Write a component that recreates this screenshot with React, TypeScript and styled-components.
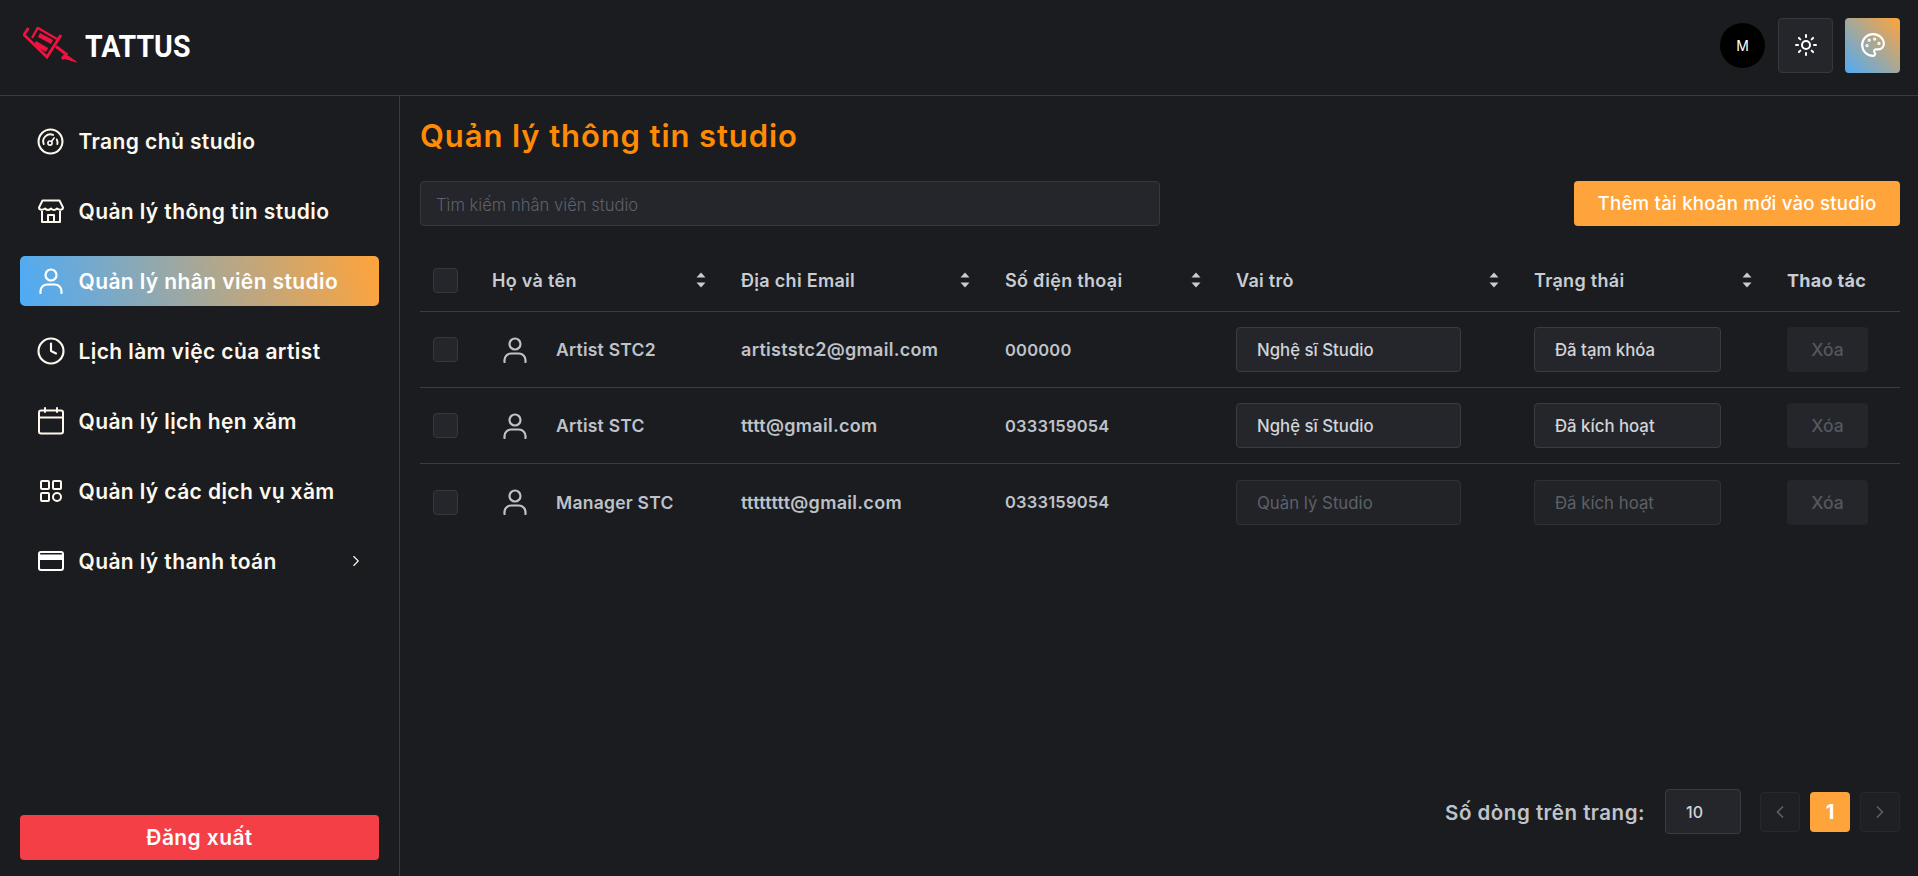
import styled, { createGlobalStyle } from 'styled-components'
import { ChevronLeft, ChevronRight, Clock, Palette, Sun } from 'lucide-react'

const GlobalStyle = createGlobalStyle`
  * { box-sizing: border-box; }
  html, body { margin: 0; height: 100%; background: #1a1c20; }
  body { font-family: Inter, "Liberation Sans", sans-serif; overflow: hidden; }
`

const Page = styled.div`
  width: 1918px;
  height: 876px;
  display: flex;
  flex-direction: column;
  background: #1a1c20;
  color: #fff;
`

const TopBar = styled.header`
  height: 96px;
  flex: none;
  display: flex;
  align-items: center;
  justify-content: space-between;
  padding: 0 18px 5px 23px;
  border-bottom: 1px solid #3a3c42;
`

const Brand = styled.div`
  display: flex;
  align-items: center;
  gap: 8px;
`

const BrandName = styled.span`
  display: inline-block;
  margin-top: 2px;
  font-family: Roboto, sans-serif;
  font-weight: 700;
  font-size: 32px;
  line-height: 1;
  color: #fff;
  transform: scaleX(0.89);
  transform-origin: left center;
`

const TopActions = styled.div`
  display: flex;
  align-items: center;
  gap: 12px;
`

const Avatar = styled.div`
  width: 45px;
  height: 45px;
  margin-right: 1px;
  border-radius: 50%;
  background: #000;
  display: flex;
  align-items: center;
  justify-content: center;
  font-size: 14px;
  font-weight: 400;
`

const IconTile = styled.div<{ $gradient?: boolean }>`
  width: 55px;
  height: 55px;
  border-radius: 4px;
  display: flex;
  align-items: center;
  justify-content: center;
  border: ${(p) => (p.$gradient ? 'none' : '1px solid #36383e')};
  background: ${(p) =>
    p.$gradient ? 'linear-gradient(45deg, #4dabf7 0%, #ffa43a 100%)' : '#24262b'};
`

const Body = styled.div`
  flex: 1;
  min-height: 0;
  display: flex;
`

const Sidebar = styled.aside`
  width: 400px;
  flex: none;
  display: flex;
  flex-direction: column;
  padding: 20px 20px 16px;
  border-right: 1px solid #3a3c42;
`

const Menu = styled.nav`
  display: flex;
  flex-direction: column;
  gap: 20px;
`

const MenuItem = styled.div<{ $active?: boolean }>`
  height: 50px;
  display: flex;
  align-items: center;
  gap: 13px;
  padding-left: 15.5px;
  padding-right: 14px;
  border-radius: 5px;
  font-size: 21px;
  font-weight: 600;
  letter-spacing: 0.4px;
  color: ${(p) => (p.$active ? '#fff' : '#fff8ec')};
  background: ${(p) =>
    p.$active ? 'linear-gradient(75deg, #4dabf7 0%, #ffa43a 100%)' : 'transparent'};
`

const MenuIcon = styled.span`
  width: 30px;
  height: 30px;
  flex: none;
  display: flex;
  align-items: center;
  justify-content: center;
`

const MenuLabel = styled.span`
  flex: 1;
  white-space: nowrap;
`

const LogoutButton = styled.button`
  margin-top: auto;
  height: 45px;
  border: none;
  border-radius: 4px;
  background: #f43f46;
  color: #fff;
  font-family: inherit;
  font-size: 21px;
  font-weight: 600;
  letter-spacing: 0.4px;
`

const Main = styled.main`
  flex: 1;
  min-width: 0;
  display: flex;
  flex-direction: column;
  padding: 18px 18px 42px 20px;
`

const Title = styled.h1`
  margin: 0;
  font-size: 31px;
  line-height: 44px;
  font-weight: 600;
  letter-spacing: 0.9px;
  color: #ff8a05;
`

const Toolbar = styled.div`
  margin-top: 23px;
  display: flex;
  justify-content: space-between;
`

const SearchBox = styled.div`
  width: 740px;
  height: 45px;
  display: flex;
  align-items: center;
  padding: 3px 16px 0 15px;
  border: 1px solid #36383e;
  border-radius: 4px;
  background: #24262b;
  color: #5d6068;
  font-size: 16.6px;
  font-weight: 300;
`

const AddButton = styled.div`
  width: 326px;
  height: 45px;
  display: flex;
  align-items: center;
  justify-content: center;
  border-radius: 4px;
  background: #ffa43a;
  color: #fff;
  font-size: 18.7px;
  font-weight: 500;
  letter-spacing: 0.2px;
`

const Row = styled.div<{ $header?: boolean; $last?: boolean }>`
  display: grid;
  grid-template-columns: 60px 249px 264px 231px 298px 253px 125px;
  align-items: center;
  height: ${(p) => (p.$header ? '65px' : '76px')};
  margin-top: ${(p) => (p.$header ? '21px' : '0')};
  padding-top: ${(p) => (p.$header ? '2px' : '0')};
  border-bottom: ${(p) => (p.$last ? 'none' : '1px solid #3a3c42')};
`

const CheckCell = styled.div`
  padding-left: 13px;
`

const CheckBox = styled.div`
  width: 25px;
  height: 25px;
  border: 1px solid #36383e;
  border-radius: 4px;
  background: #24262b;
`

const HeadCell = styled.div`
  display: flex;
  align-items: center;
  justify-content: space-between;
  padding: 0 22px 0 12px;
  font-size: 18px;
  font-weight: 600;
  letter-spacing: 0.3px;
  color: #c9ccd2;
`

const ActionHead = styled(HeadCell)`
  font-weight: 700;
  padding-right: 0;
`

const NameCell = styled.div`
  display: flex;
  align-items: center;
  gap: 28px;
  padding-left: 22px;
  font-size: 17.5px;
  font-weight: 600;
  letter-spacing: 0.25px;
  color: #bfc2c8;
`

const TextCell = styled.div`
  padding-left: 12px;
  font-size: 18px;
  font-weight: 600;
  letter-spacing: 0.3px;
  color: #bfc2c8;
`

const PhoneCell = styled(TextCell)`
  font-size: 16.5px;
  letter-spacing: 0.2px;
`

const FieldCell = styled.div`
  padding-left: 12px;
`

const SelectBox = styled.div<{ $width: number; $disabled?: boolean }>`
  width: ${(p) => p.$width}px;
  height: 45px;
  display: flex;
  align-items: center;
  padding: 1px 0 0 20px;
  border: 1px solid ${(p) => (p.$disabled ? '#2f3136' : '#3a3c42')};
  border-radius: 4px;
  background: ${(p) => (p.$disabled ? '#212327' : '#24262b')};
  color: ${(p) => (p.$disabled ? '#5d6068' : '#d2d4d8')};
  font-size: 16.8px;
  font-weight: ${(p) => (p.$disabled ? 400 : 500)};
`

const DeleteButton = styled.div`
  width: 81px;
  height: 45px;
  display: flex;
  align-items: center;
  justify-content: center;
  border-radius: 4px;
  background: #24262b;
  color: #54575e;
  font-size: 17.5px;
  font-weight: 500;
`

const Pagination = styled.div`
  margin-top: auto;
  display: flex;
  align-items: center;
  justify-content: flex-end;
`

const PageLabel = styled.span`
  margin-right: 20px;
  padding-top: 2px;
  font-size: 20.5px;
  font-weight: 600;
  letter-spacing: 0.5px;
  color: #c0c3c9;
`

const PageSize = styled.div`
  width: 76px;
  height: 45px;
  margin-right: 19px;
  display: flex;
  align-items: center;
  padding-left: 20px;
  border: 1px solid #3a3c42;
  border-radius: 4px;
  background: #24262b;
  color: #d2d4d8;
  font-size: 16px;
  font-weight: 500;
`

const PageButton = styled.div<{ $current?: boolean }>`
  width: 40px;
  height: 40px;
  margin-left: ${(p) => (p.$current ? '10px' : '0')};
  margin-right: ${(p) => (p.$current ? '10px' : '0')};
  display: flex;
  align-items: center;
  justify-content: center;
  border: ${(p) => (p.$current ? 'none' : '1px solid #26282c')};
  border-radius: 4px;
  background: ${(p) => (p.$current ? '#ffa43a' : '#1e2024')};
  color: ${(p) => (p.$current ? '#fff' : '#5d6068')};
  font-size: 20px;
  font-weight: 700;
`

const Logo = () => (
  <svg width="54" height="38" viewBox="4 3 54 38" fill="none" stroke="#f0123f">
    <path d="M9.5 5 L5 11.7 L28 34 L42 12" strokeWidth="2.8" />
    <path d="M18 4.5 L38 16" strokeWidth="2.4" />
    <path d="M19 4.5 L13 15" strokeWidth="2.4" />
    <path d="M20 12 L33 19" strokeWidth="4.4" />
    <path d="M16 20 L28 27" strokeWidth="4.4" />
    <path d="M37 23.5 L47 31 L43 36" strokeWidth="3" />
    <path d="M46 31 L57.5 39 L44 35 Z" fill="#f0123f" strokeWidth="1" />
  </svg>
)

const GaugeIcon = () => (
  <svg width="27" height="27" viewBox="0 0 26 26" fill="none" stroke="#fff8ec" strokeWidth="2" strokeLinecap="round">
    <circle cx="13" cy="13" r="11.5" />
    <path d="M6.5 15.5 A6.8 6.8 0 0 1 15.5 6.7" strokeWidth="1.8" />
    <path d="M19 11 A6.8 6.8 0 0 1 19.6 15.5" strokeWidth="1.8" />
    <circle cx="12.5" cy="14.5" r="2" strokeWidth="1.6" />
    <path d="M14 13 L16.5 9.5" strokeWidth="1.6" />
  </svg>
)

const StoreIcon = () => (
  <svg width="26" height="24" viewBox="0 0 26 24" fill="none" stroke="#fff8ec" strokeWidth="2" strokeLinejoin="round">
    <path d="M4.5 1.5 H21.5 L25 8.5 C25 11 21.5 11.5 19 9.5 C17 11.5 15 11.5 13 9.5 C11 11.5 9 11.5 7 9.5 C4.5 11.5 1 11 1 8.5 Z" />
    <path d="M4 12 V23 H22 V12" />
    <path d="M10 23 V16 H16 V23" />
  </svg>
)

const PersonIcon = ({ size = 26 }: { size?: number }) => (
  <svg width={size} height={size} viewBox="0 0 26 26" fill="none" stroke="currentColor" strokeWidth="2.2" strokeLinecap="round">
    <circle cx="13" cy="7" r="5.5" />
    <path d="M2.5 25 V23 A6.5 6.5 0 0 1 9 16.5 H17 A6.5 6.5 0 0 1 23.5 23 V25" />
  </svg>
)

const CalendarIcon = () => (
  <svg width="26" height="28" viewBox="0 0 26 28" fill="none" stroke="#fff8ec" strokeWidth="2" strokeLinecap="round">
    <rect x="1" y="3.5" width="24" height="23" rx="2" />
    <path d="M1 10.5 H25 M7 1 V5 M19 1 V5" />
  </svg>
)

const ServicesIcon = () => (
  <svg width="24" height="24" viewBox="0 0 24 24" fill="none" stroke="#fff8ec" strokeWidth="2">
    <rect x="2" y="2" width="8" height="8" rx="1" />
    <rect x="14" y="2" width="8" height="8" rx="1" />
    <rect x="2" y="14" width="8" height="8" rx="1" />
    <circle cx="18" cy="18" r="4" />
  </svg>
)

const CardIcon = () => (
  <svg width="26" height="20" viewBox="0 0 26 20" fill="none">
    <rect x="1" y="1" width="24" height="18" rx="2" stroke="#fff" strokeWidth="2" />
    <rect x="1" y="3.5" width="24" height="5.5" fill="#fff" />
  </svg>
)

const SortIcon = () => (
  <svg width="12" height="18" viewBox="0 0 12 18" fill="#c9ccd2">
    <path d="M6 1.5 L10.5 6.5 H1.5 Z" />
    <path d="M6 16.5 L1.5 11.5 H10.5 Z" />
  </svg>
)

const navItems = [
  { label: 'Trang chủ studio', icon: <GaugeIcon /> },
  { label: 'Quản lý thông tin studio', icon: <StoreIcon /> },
  { label: 'Quản lý nhân viên studio', icon: <PersonIcon />, active: true },
  { label: 'Lịch làm việc của artist', icon: <Clock size={30} strokeWidth={1.7} /> },
  { label: 'Quản lý lịch hẹn xăm', icon: <CalendarIcon /> },
  { label: 'Quản lý các dịch vụ xăm', icon: <ServicesIcon /> },
  { label: 'Quản lý thanh toán', icon: <CardIcon />, more: true },
]

const columns = ['Họ và tên', 'Địa chỉ Email', 'Số điện thoại', 'Vai trò', 'Trạng thái']

const staff = [
  { name: 'Artist STC2', email: 'artiststc2@gmail.com', phone: '000000', role: 'Nghệ sĩ Studio', status: 'Đã tạm khóa' },
  { name: 'Artist STC', email: 'tttt@gmail.com', phone: '0333159054', role: 'Nghệ sĩ Studio', status: 'Đã kích hoạt' },
  { name: 'Manager STC', email: 'tttttttt@gmail.com', phone: '0333159054', role: 'Quản lý Studio', status: 'Đã kích hoạt', locked: true },
]

const App = () => {
  return (
    <Page>
      <GlobalStyle />
      <TopBar>
        <Brand>
          <Logo />
          <BrandName>TATTUS</BrandName>
        </Brand>
        <TopActions>
          <Avatar>M</Avatar>
          <IconTile>
            <Sun size={24} color="#fff" strokeWidth={2} />
          </IconTile>
          <IconTile $gradient>
            <Palette size={26} color="#fff" strokeWidth={2} />
          </IconTile>
        </TopActions>
      </TopBar>
      <Body>
        <Sidebar>
          <Menu>
            {navItems.map((item) => (
              <MenuItem key={item.label} $active={item.active}>
                <MenuIcon>{item.icon}</MenuIcon>
                <MenuLabel>{item.label}</MenuLabel>
                {item.more && <ChevronRight size={18} strokeWidth={1.5} />}
              </MenuItem>
            ))}
          </Menu>
          <LogoutButton>Đăng xuất</LogoutButton>
        </Sidebar>
        <Main>
          <Title>Quản lý thông tin studio</Title>
          <Toolbar>
            <SearchBox>Tìm kiếm nhân viên studio</SearchBox>
            <AddButton>Thêm tài khoản mới vào studio</AddButton>
          </Toolbar>
          <Row $header>
            <CheckCell>
              <CheckBox />
            </CheckCell>
            {columns.map((column) => (
              <HeadCell key={column}>
                {column}
                <SortIcon />
              </HeadCell>
            ))}
            <ActionHead>Thao tác</ActionHead>
          </Row>
          {staff.map((person, index) => (
            <Row key={person.name} $last={index === staff.length - 1}>
              <CheckCell>
                <CheckBox />
              </CheckCell>
              <NameCell>
                <PersonIcon size={26} />
                {person.name}
              </NameCell>
              <TextCell>{person.email}</TextCell>
              <PhoneCell>{person.phone}</PhoneCell>
              <FieldCell>
                <SelectBox $width={225} $disabled={person.locked}>{person.role}</SelectBox>
              </FieldCell>
              <FieldCell>
                <SelectBox $width={187} $disabled={person.locked}>{person.status}</SelectBox>
              </FieldCell>
              <FieldCell>
                <DeleteButton>Xóa</DeleteButton>
              </FieldCell>
            </Row>
          ))}
          <Pagination>
            <PageLabel>Số dòng trên trang:</PageLabel>
            <PageSize>10</PageSize>
            <PageButton>
              <ChevronLeft size={20} strokeWidth={2} />
            </PageButton>
            <PageButton $current>1</PageButton>
            <PageButton>
              <ChevronRight size={20} strokeWidth={2} />
            </PageButton>
          </Pagination>
        </Main>
      </Body>
    </Page>
  )
}

export default App
